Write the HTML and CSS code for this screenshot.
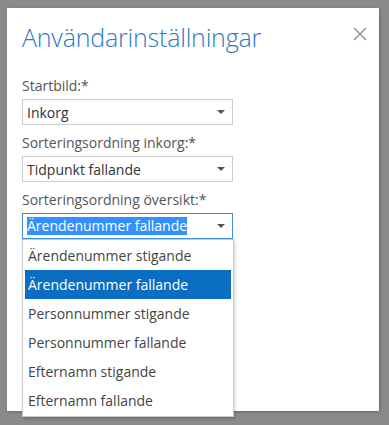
FILE: index.html
```html
<!DOCTYPE html>
<html lang="sv">
<head>
<meta charset="UTF-8">
<meta name="viewport" content="width=device-width, initial-scale=1.0">
<title>Användarinställningar</title>
<link rel="stylesheet" href="styles.css">
</head>
<body>
<div class="dialog">
    <div class="dialog-header">
        <h1>Användarinställningar</h1>
        <svg class="close" width="14" height="14" viewBox="0 0 14 14"><path d="M1 1l12 12M13 1L1 13" stroke="#8c8c8c" stroke-width="1.3" fill="none"/></svg>
    </div>
    <div class="field">
        <label>Startbild:*</label>
        <div class="select">
            <span>Inkorg</span>
            <svg class="arrow" width="8" height="4" viewBox="0 0 8 4"><path d="M0 0h8L4 4z" fill="#555"/></svg>
        </div>
    </div>
    <div class="field">
        <label>Sorteringsordning inkorg:*</label>
        <div class="select">
            <span>Tidpunkt fallande</span>
            <svg class="arrow" width="8" height="4" viewBox="0 0 8 4"><path d="M0 0h8L4 4z" fill="#555"/></svg>
        </div>
    </div>
    <div class="field open">
        <label>Sorteringsordning översikt:*</label>
        <div class="select focused">
            <span class="selected-text">Ärendenummer fallande</span>
            <svg class="arrow" width="8" height="4" viewBox="0 0 8 4"><path d="M0 0h8L4 4z" fill="#555"/></svg>
        </div>
        <ul class="options">
            <li>Ärendenummer stigande</li>
            <li class="active">Ärendenummer fallande</li>
            <li>Personnummer stigande</li>
            <li>Personnummer fallande</li>
            <li>Efternamn stigande</li>
            <li>Efternamn fallande</li>
        </ul>
    </div>
</div>
</body>
</html>
```

FILE: styles.css
```css
body {
    margin: 0;
    padding: 8px 0 0 7px;
    background-color: #8a8a8a;
    font-family: "Open Sans", "Noto Sans", sans-serif;
    height: 425px;
    box-sizing: border-box;
    overflow: hidden;
}
.dialog {
    width: 372px;
    height: 403px;
    background-color: #fff;
    box-sizing: border-box;
    padding: 0 15px;
    box-shadow: 1px 1px 3px rgba(0, 0, 0, 0.25);
}
.dialog-header {
    display: flex;
    justify-content: space-between;
    align-items: flex-start;
    height: 69px;
}
h1 {
    margin: 12px 0 0;
    font-size: 25px;
    font-weight: 300;
    color: #2b79c2;
    letter-spacing: -0.2px;
}
.close {
    margin: 19px -3px 0 0;
}
.field {
    position: relative;
    margin-bottom: 9px;
}
label {
    display: block;
    font-size: 14px;
    line-height: 18px;
    color: #555;
    margin-bottom: 4px;
}
.select {
    width: 211px;
    height: 26px;
    box-sizing: border-box;
    border: 1px solid #ccc;
    display: flex;
    align-items: center;
    justify-content: space-between;
    padding: 0 7px 0 4px;
    font-size: 14px;
    color: #333;
}
.select.focused {
    border-color: #3a8fd9;
}
.selected-text {
    background-color: #3390ff;
    color: #fff;
    line-height: 18px;
}
.options {
    position: absolute;
    left: 0;
    top: 48px;
    width: 212px;
    margin: 0;
    padding: 1px 2px;
    list-style: none;
    background-color: #fff;
    border: 1px solid #ccc;
    box-sizing: border-box;
    box-shadow: 1px 2px 3px rgba(0, 0, 0, 0.2);
}
.options li {
    height: 29px;
    line-height: 29px;
    padding-left: 3px;
    font-size: 14px;
    color: #444;
}
.options li.active {
    background-color: #0a6fc2;
    color: #fff;
}
```
